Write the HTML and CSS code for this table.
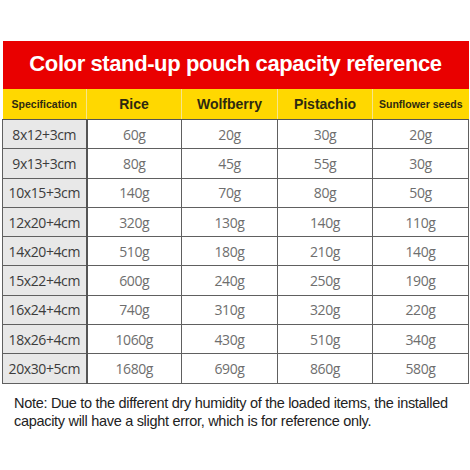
FILE: index.html
```html
<!DOCTYPE html>
<html>
<head>
<meta charset="utf-8">
<link rel="stylesheet" href="styles.css">
</head>
<body>
<div class="page">
  <table class="cap">
    <colgroup>
      <col class="c1"><col class="c2"><col class="c3"><col class="c4"><col class="c5">
    </colgroup>
    <thead>
      <tr class="title-row"><th colspan="5">Color stand-up pouch capacity reference</th></tr>
      <tr class="head-row">
        <th class="small">Specification</th>
        <th>Rice</th>
        <th>Wolfberry</th>
        <th>Pistachio</th>
        <th class="small">Sunflower seeds</th>
      </tr>
    </thead>
    <tbody>
      <tr><td class="spec">8x12+3cm</td><td>60g</td><td>20g</td><td>30g</td><td>20g</td></tr>
      <tr><td class="spec">9x13+3cm</td><td>80g</td><td>45g</td><td>55g</td><td>30g</td></tr>
      <tr><td class="spec">10x15+3cm</td><td>140g</td><td>70g</td><td>80g</td><td>50g</td></tr>
      <tr><td class="spec">12x20+4cm</td><td>320g</td><td>130g</td><td>140g</td><td>110g</td></tr>
      <tr><td class="spec">14x20+4cm</td><td>510g</td><td>180g</td><td>210g</td><td>140g</td></tr>
      <tr><td class="spec">15x22+4cm</td><td>600g</td><td>240g</td><td>250g</td><td>190g</td></tr>
      <tr><td class="spec">16x24+4cm</td><td>740g</td><td>310g</td><td>320g</td><td>220g</td></tr>
      <tr><td class="spec">18x26+4cm</td><td>1060g</td><td>430g</td><td>510g</td><td>340g</td></tr>
      <tr><td class="spec">20x30+5cm</td><td>1680g</td><td>690g</td><td>860g</td><td>580g</td></tr>
    </tbody>
  </table>
  <p class="note">Note: Due to the different dry humidity of the loaded items, the installed capacity will have a slight error, which is for reference only.</p>
</div>
</body>
</html>
```
FILE: styles.css
```css
html, body {
  margin: 0;
  padding: 0;
  background: #ffffff;
}
.page {
  padding: 41px 2px 0 2px;
  width: 466px;
}
.cap {
  width: 466px;
  border-collapse: collapse;
  table-layout: fixed;
}
.c1 { width: 84px; }
.c2 { width: 95px; }
.c3 { width: 96px; }
.c4 { width: 95px; }
.c5 { width: 96px; }
.title-row th {
  background: #e90000;
  color: #ffffff;
  font-family: "Liberation Sans", Arial, sans-serif;
  font-weight: bold;
  font-size: 22px;
  letter-spacing: -0.4px;
  height: 46px;
  padding: 0 0 2px 0;
  text-align: center;
}
.head-row th {
  background: #ffd800;
  color: #2e2a10;
  font-family: "Liberation Sans", Arial, sans-serif;
  font-weight: bold;
  font-size: 14px;
  height: 30px;
  padding: 0;
  text-align: center;
  border-left: 1.5px solid #f7e58a;
  border-bottom: 1.5px solid #555555;
}
.head-row th:first-child { border-left: none; }
.head-row th.small { font-size: 10.5px; }
tbody td {
  height: 28.3px;
  padding: 0;
  text-align: center;
  font-family: "Open Sans", "DejaVu Sans", sans-serif;
  font-size: 14px;
  letter-spacing: -0.4px;
  color: #6e6e6e;
  border: 1.5px solid #606060;
  background: #ffffff;
}
tbody td.spec {
  background: #e8e8e8;
  color: #3c3c3c;
  border-right: 2px solid #555555;
}
.note {
  margin: 10px 0 0 12px;
  font-family: "Liberation Sans", Arial, sans-serif;
  font-size: 14.5px;
  letter-spacing: -0.3px;
  line-height: 18px;
  color: #222222;
}
```
